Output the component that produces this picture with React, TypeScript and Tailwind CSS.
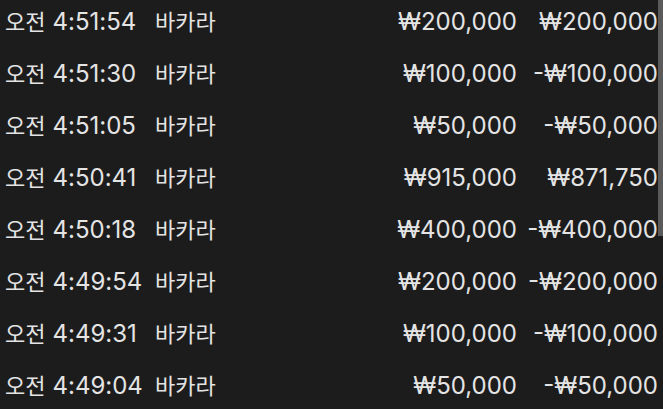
const rows = [
    { time: '4:51:54', game: '바카라', bet: '₩200,000', result: '₩200,000' },
    { time: '4:51:30', game: '바카라', bet: '₩100,000', result: '-₩100,000' },
    { time: '4:51:05', game: '바카라', bet: '₩50,000', result: '-₩50,000' },
    { time: '4:50:41', game: '바카라', bet: '₩915,000', result: '₩871,750' },
    { time: '4:50:18', game: '바카라', bet: '₩400,000', result: '-₩400,000' },
    { time: '4:49:54', game: '바카라', bet: '₩200,000', result: '-₩200,000' },
    { time: '4:49:31', game: '바카라', bet: '₩100,000', result: '-₩100,000' },
    { time: '4:49:04', game: '바카라', bet: '₩50,000', result: '-₩50,000' },
];

export default function App() {
    return (
        <div className="w-[663px] h-[409px] overflow-hidden bg-[#1c1c1c] flex text-[#e4e4e4] text-[24px] font-['Inter','Noto_Sans_CJK_KR',sans-serif]">
            <div className="flex-1 -mt-1">
                {rows.map((r, i) => (
                    <div key={i} className="h-[52px] flex items-center pl-[5px] leading-none">
                        <div className="w-[150px] whitespace-nowrap">
                            <span className="text-[22px] mr-[7px]">오전</span>{r.time}
                        </div>
                        <div className="flex-1 text-[22px]">{r.game}</div>
                        <div className="w-[200px] text-right whitespace-nowrap">{r.bet}</div>
                        <div className="w-[141px] text-right whitespace-nowrap">{r.result}</div>
                    </div>
                ))}
            </div>
            <div className="w-[5px] flex flex-col">
                <div className="h-[236px] bg-[#5a5a5a]"></div>
            </div>
        </div>
    );
}
